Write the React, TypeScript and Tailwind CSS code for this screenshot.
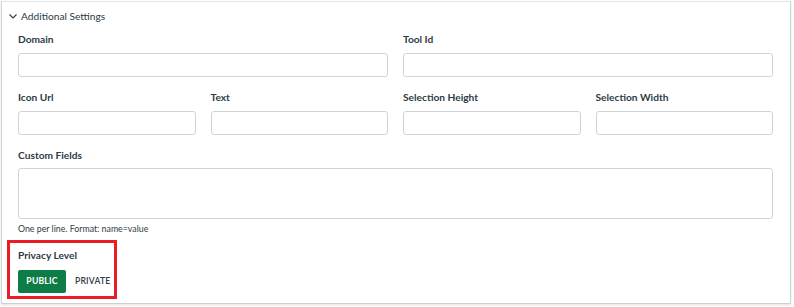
import { useState } from 'react';

const font = { fontFamily: 'Lato, "Noto Sans", sans-serif' };

const Field = ({ label, className = '' }: { label: string; className?: string }) => (
  <div className={className}>
    <label className="block h-4 text-[10.2px] font-bold leading-4 text-[#2d3b45]">{label}</label>
    <input
      type="text"
      className="mt-[6px] block h-6 w-full rounded-[3px] border border-[#d0d4d8] bg-white px-2 text-[12px] focus:outline-none"
    />
  </div>
);

export default function App() {
  const [privacy, setPrivacy] = useState<'public' | 'private'>('public');

  return (
    <div className="h-[307px] w-[794px] bg-white pl-px pt-px" style={font}>
      <div className="h-[303px] w-[790px] border border-t-[#e3e3e3] border-x-[#d5d5d5] border-b-[#cfcfcf] bg-white pl-4 pr-[17px] shadow-[0_1px_2px_rgba(0,0,0,0.12)]">
        {/* Header */}
        <button type="button" className="-ml-[9px] mt-[6px] flex h-4 items-center gap-[4px] text-[10.2px] leading-4 text-[#2d3b45]">
          <svg width="8" height="5" viewBox="0 0 8 5" fill="none" stroke="#2d3b45" strokeWidth="1.1">
            <path d="M0.5 0.5 L4 4 L7.5 0.5" />
          </svg>
          Additional Settings
        </button>

        {/* Domain / Tool Id */}
        <div className="mt-[7px] grid grid-cols-2 gap-x-[15px]">
          <Field label="Domain" />
          <Field label="Tool Id" />
        </div>

        {/* Icon / Text / Selection */}
        <div className="mt-3 grid grid-cols-4 gap-x-[15px]">
          <Field label="Icon Url" />
          <Field label="Text" />
          <Field label="Selection Height" />
          <Field label="Selection Width" />
        </div>

        {/* Custom Fields */}
        <div className="mt-3">
          <label className="block h-4 text-[10.2px] font-bold leading-4 text-[#2d3b45]">Custom Fields</label>
          <textarea className="mt-[5px] block h-[51px] w-full resize-none rounded-[3px] border border-[#d0d4d8] bg-white focus:outline-none" />
          <p className="mt-[3px] h-[14px] text-[8.8px] leading-[14px] text-[#2d3b45]">One per line. Format: name=value</p>
        </div>

        {/* Privacy Level */}
        <div className="-ml-[11px] mt-[4px] h-[59px] w-[110px] border-[3px] border-[#ec1c24] pl-2 pt-1">
          <p className="h-4 text-[10.2px] font-bold leading-4 text-[#2d3b45]">Privacy Level</p>
          <div className="mt-[7px] flex items-center">
            <button
              type="button"
              onClick={() => setPrivacy('public')}
              className={`h-[23px] w-12 shrink-0 rounded-[2px] text-[8.6px] font-bold tracking-[0.2px] ${
                privacy === 'public' ? 'bg-[#0e7c46] text-white' : 'text-[#2d3b45]'
              }`}
            >
              PUBLIC
            </button>
            <button
              type="button"
              onClick={() => setPrivacy('private')}
              className={`ml-[9px] h-[23px] shrink-0 text-[8.6px] font-semibold tracking-[0.2px] ${
                privacy === 'private' ? 'rounded-[2px] bg-[#0e7c46] px-1 text-white' : 'text-[#2d3b45]'
              }`}
            >
              PRIVATE
            </button>
          </div>
        </div>
      </div>
    </div>
  );
}
